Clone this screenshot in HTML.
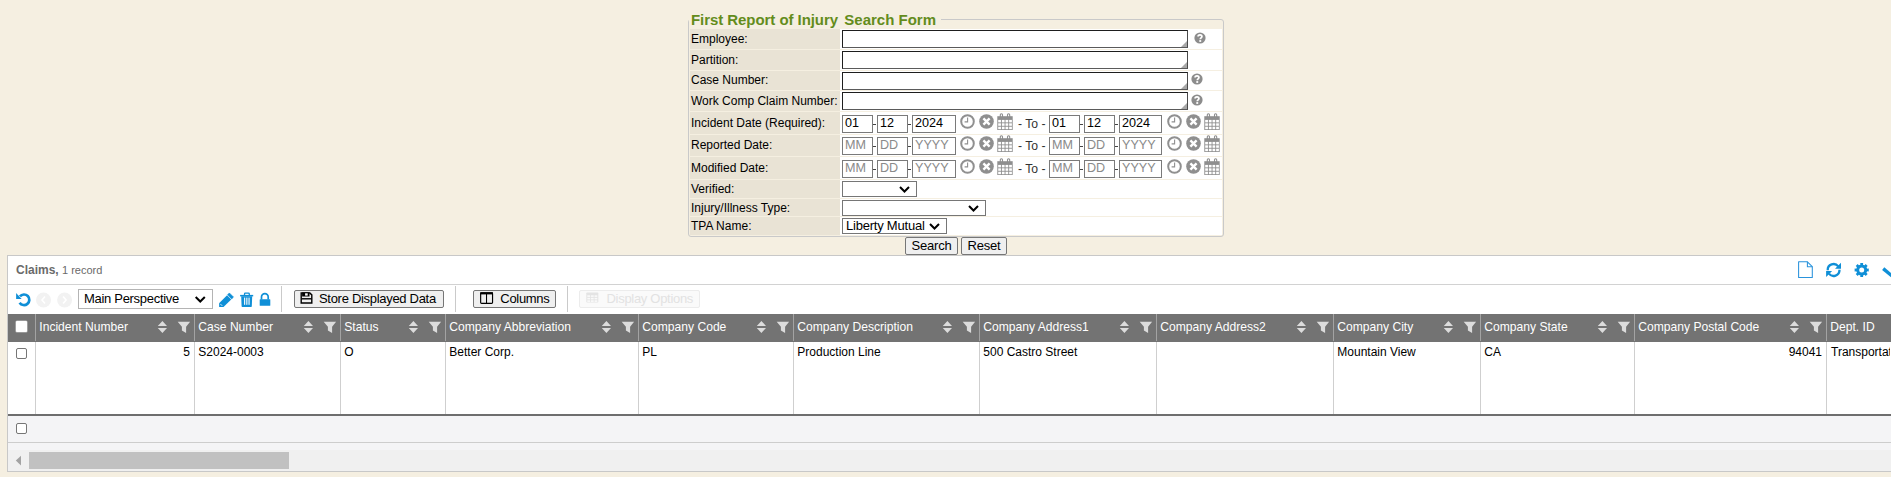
<!DOCTYPE html>
<html><head><meta charset="utf-8">
<style>
html,body{margin:0;padding:0;}
body{width:1891px;height:477px;overflow:hidden;background:#f5efe1;font-family:"Liberation Sans",sans-serif;font-size:12px;color:#000;position:relative;}
.a{position:absolute;}
/* form */
#fs{left:688px;top:19px;width:534px;height:216px;border:1px solid #c9c9c9;border-radius:3px;}
#legend{left:689px;top:9px;height:20px;width:244px;padding:0 6px 0 2px;white-space:nowrap;background:#f5efe1;color:#638c1c;font-weight:bold;font-size:15px;line-height:20px;}
.lab{left:690px;width:150px;background:#e9e3d5;}
.val{left:840px;width:382px;background:#fff;}
.lt{left:691px;white-space:nowrap;}
.ta{left:842px;width:344px;height:16px;border:1px solid #1e1e1e;border-right-color:#4a4a4a;border-bottom-color:#5a5a5a;background:#fff;}
.ta:after{content:"";position:absolute;right:0;bottom:0;width:0;height:0;border-left:6px solid transparent;border-bottom:6px solid #a8a8a8;}
.help{width:11px;height:11px;border-radius:50%;background:#8c8c8c;color:#fff;font-weight:bold;font-size:10px;line-height:11px;text-align:center;}
.di{border:1px solid #7a7a7a;background:#fff;font-size:12.6px;line-height:15px;padding-left:2px;box-sizing:border-box;height:18px;}
.ph{color:#8a8a8a;}
.dsh{width:3px;height:1px;background:#444;}
.to{font-size:12.2px;line-height:14px;color:#333;white-space:nowrap;}
.sel{height:16px;border:1px solid #767676;background:#fff;box-sizing:border-box;}
.chev{position:absolute;top:4px;}
.st{position:absolute;left:3px;top:0px;font-size:13px;letter-spacing:-0.22px;line-height:14px;white-space:nowrap;}
.btn{height:18px;border:1px solid #767676;background:#efefef;border-radius:2px;box-sizing:border-box;font-size:13px;letter-spacing:-0.2px;line-height:16px;text-align:center;}
/* grid */
.psel{border:1px solid #b4b4b4;background:#fff;box-sizing:border-box;font-size:13px;letter-spacing:-0.3px;line-height:14px;white-space:nowrap;}
.tbtn{height:18px;border:1px solid #767676;background:#efefef;border-radius:2px;box-sizing:border-box;font-size:13px;letter-spacing:-0.3px;line-height:14px;white-space:nowrap;}
.tbtn.dis{border-color:#ececec;background:#fafafa;color:#e2e2e2;}
.hd{color:#fff;font-size:12.1px;line-height:14px;white-space:nowrap;}
.cv{line-height:14px;white-space:nowrap;}
.cb{width:11px;height:11px;border:1px solid #767676;border-radius:2px;box-sizing:border-box;background:#fff;}

#panel{left:7px;top:255px;width:1900px;height:215px;border:1px solid #c8c8c8;background:#fff;}
</style></head><body>
<svg width="0" height="0" style="position:absolute">
<defs>
<symbol id="help" viewBox="0 0 12 12"><circle cx="6" cy="6" r="5.6" fill="#8c8c8c"/><path d="M4.1 4.6 C4.1 2.4 7.9 2.4 7.9 4.6 C7.9 5.9 6.3 5.9 6.3 7.2" fill="none" stroke="#fff" stroke-width="1.8"/><rect x="5.3" y="8.1" width="1.9" height="1.8" fill="#fff"/></symbol>
<symbol id="clock" viewBox="0 0 15 15"><circle cx="7.5" cy="7.5" r="6.3" fill="none" stroke="#909090" stroke-width="2"/><path d="M7.6 3.6 V7.9 H4.6" fill="none" stroke="#909090" stroke-width="1.1"/></symbol>
<symbol id="clear" viewBox="0 0 15 15"><circle cx="7.5" cy="7.5" r="7.3" fill="#8f8f8f"/><path d="M4.4 4.4 L10.6 10.6 M10.6 4.4 L4.4 10.6" stroke="#fff" stroke-width="2.4"/></symbol>
<symbol id="cal" viewBox="0 0 16 17"><rect x="0.3" y="3.2" width="15.4" height="13.8" fill="#8f8f8f"/><g fill="#fff"><rect x="1.2" y="6.9" width="2.75" height="2.5"/><rect x="4.85" y="6.9" width="2.75" height="2.5"/><rect x="8.5" y="6.9" width="2.75" height="2.5"/><rect x="12.15" y="6.9" width="2.75" height="2.5"/><rect x="1.2" y="10.3" width="2.75" height="2.5"/><rect x="4.85" y="10.3" width="2.75" height="2.5"/><rect x="8.5" y="10.3" width="2.75" height="2.5"/><rect x="12.15" y="10.3" width="2.75" height="2.5"/><rect x="1.2" y="13.7" width="2.75" height="2.5"/><rect x="4.85" y="13.7" width="2.75" height="2.5"/><rect x="8.5" y="13.7" width="2.75" height="2.5"/><rect x="12.15" y="13.7" width="2.75" height="2.5"/></g><rect x="3.3" y="0.7" width="2.2" height="4" rx="1" fill="none" stroke="#8f8f8f" stroke-width="1.1"/><rect x="10.5" y="0.7" width="2.2" height="4" rx="1" fill="none" stroke="#8f8f8f" stroke-width="1.1"/></symbol>
<symbol id="chev" viewBox="0 0 11 7"><path d="M1 1 L5.5 5.5 L10 1" fill="none" stroke="#000" stroke-width="2"/></symbol>
</defs></svg>
<div class="a" id="fs"></div>
<div class="a" id="legend" style="top:10px"><span style="letter-spacing:-0.06px">First Report of Injury</span><span style="position:absolute;left:155.3px;top:0">Search Form</span></div>

<!-- rows -->
<div class="a lab" style="top:29px;height:20px"></div><div class="a val" style="top:29px;height:20px"></div>
<div class="a lab" style="top:50px;height:20px"></div><div class="a val" style="top:50px;height:20px"></div>
<div class="a lab" style="top:71px;height:19px"></div><div class="a val" style="top:71px;height:19px"></div>
<div class="a lab" style="top:91px;height:20px"></div><div class="a val" style="top:91px;height:20px"></div>
<div class="a lab" style="top:112px;height:22px"></div><div class="a val" style="top:112px;height:22px"></div>
<div class="a lab" style="top:135px;height:21px"></div><div class="a val" style="top:135px;height:21px"></div>
<div class="a lab" style="top:157px;height:22px"></div><div class="a val" style="top:157px;height:22px"></div>
<div class="a lab" style="top:180px;height:18px"></div><div class="a val" style="top:180px;height:18px"></div>
<div class="a lab" style="top:199px;height:17px"></div><div class="a val" style="top:199px;height:17px"></div>
<div class="a lab" style="top:217px;height:18px"></div><div class="a val" style="top:217px;height:18px"></div>
<div class="a lt" style="top:32px">Employee:</div>
<div class="a lt" style="top:53px">Partition:</div>
<div class="a lt" style="top:73px">Case Number:</div>
<div class="a lt" style="top:94px">Work Comp Claim Number:</div>
<div class="a lt" style="top:115.5px">Incident Date (Required):</div>
<div class="a lt" style="top:137.5px">Reported Date:</div>
<div class="a lt" style="top:160.5px">Modified Date:</div>
<div class="a lt" style="top:182px">Verified:</div>
<div class="a lt" style="top:201px">Injury/Illness Type:</div>
<div class="a lt" style="top:219px">TPA Name:</div>
<div class="a ta" style="top:30px"></div>
<div class="a ta" style="top:51px"></div>
<div class="a ta" style="top:72px"></div>
<div class="a ta" style="top:92px"></div>
<svg class="a" style="left:1194px;top:32px" width="12" height="12"><use href="#help"/></svg>
<svg class="a" style="left:1191px;top:73px" width="12" height="12"><use href="#help"/></svg>
<svg class="a" style="left:1191px;top:94px" width="12" height="12"><use href="#help"/></svg>
<div class="a di" style="left:842px;top:115px;width:31px">01</div>
<div class="a di" style="left:877px;top:115px;width:31px">12</div>
<div class="a di" style="left:912px;top:115px;width:44px">2024</div>
<div class="a di" style="left:1049px;top:115px;width:31px">01</div>
<div class="a di" style="left:1084px;top:115px;width:31px">12</div>
<div class="a di" style="left:1119px;top:115px;width:43px">2024</div>
<div class="a dsh" style="left:873px;top:124px"></div>
<div class="a dsh" style="left:908px;top:124px"></div>
<div class="a dsh" style="left:1080px;top:124px"></div>
<div class="a dsh" style="left:1115px;top:124px"></div>
<svg class="a" style="left:959.7px;top:114px" width="15" height="15"><use href="#clock"/></svg>
<svg class="a" style="left:978.7px;top:114px" width="15" height="15"><use href="#clear"/></svg>
<svg class="a" style="left:997px;top:113px" width="16" height="17"><use href="#cal"/></svg>
<svg class="a" style="left:1167.2px;top:114px" width="15" height="15"><use href="#clock"/></svg>
<svg class="a" style="left:1186.2px;top:114px" width="15" height="15"><use href="#clear"/></svg>
<svg class="a" style="left:1203.8px;top:113px" width="16" height="17"><use href="#cal"/></svg>
<div class="a to" style="left:1018px;top:117px">- To -</div>
<div class="a di ph" style="left:842px;top:137px;width:31px">MM</div>
<div class="a di ph" style="left:877px;top:137px;width:31px">DD</div>
<div class="a di ph" style="left:912px;top:137px;width:44px">YYYY</div>
<div class="a di ph" style="left:1049px;top:137px;width:31px">MM</div>
<div class="a di ph" style="left:1084px;top:137px;width:31px">DD</div>
<div class="a di ph" style="left:1119px;top:137px;width:43px">YYYY</div>
<div class="a dsh" style="left:873px;top:146px"></div>
<div class="a dsh" style="left:908px;top:146px"></div>
<div class="a dsh" style="left:1080px;top:146px"></div>
<div class="a dsh" style="left:1115px;top:146px"></div>
<svg class="a" style="left:959.7px;top:136px" width="15" height="15"><use href="#clock"/></svg>
<svg class="a" style="left:978.7px;top:136px" width="15" height="15"><use href="#clear"/></svg>
<svg class="a" style="left:997px;top:135px" width="16" height="17"><use href="#cal"/></svg>
<svg class="a" style="left:1167.2px;top:136px" width="15" height="15"><use href="#clock"/></svg>
<svg class="a" style="left:1186.2px;top:136px" width="15" height="15"><use href="#clear"/></svg>
<svg class="a" style="left:1203.8px;top:135px" width="16" height="17"><use href="#cal"/></svg>
<div class="a to" style="left:1018px;top:139px">- To -</div>
<div class="a di ph" style="left:842px;top:160px;width:31px">MM</div>
<div class="a di ph" style="left:877px;top:160px;width:31px">DD</div>
<div class="a di ph" style="left:912px;top:160px;width:44px">YYYY</div>
<div class="a di ph" style="left:1049px;top:160px;width:31px">MM</div>
<div class="a di ph" style="left:1084px;top:160px;width:31px">DD</div>
<div class="a di ph" style="left:1119px;top:160px;width:43px">YYYY</div>
<div class="a dsh" style="left:873px;top:169px"></div>
<div class="a dsh" style="left:908px;top:169px"></div>
<div class="a dsh" style="left:1080px;top:169px"></div>
<div class="a dsh" style="left:1115px;top:169px"></div>
<svg class="a" style="left:959.7px;top:159px" width="15" height="15"><use href="#clock"/></svg>
<svg class="a" style="left:978.7px;top:159px" width="15" height="15"><use href="#clear"/></svg>
<svg class="a" style="left:997px;top:158px" width="16" height="17"><use href="#cal"/></svg>
<svg class="a" style="left:1167.2px;top:159px" width="15" height="15"><use href="#clock"/></svg>
<svg class="a" style="left:1186.2px;top:159px" width="15" height="15"><use href="#clear"/></svg>
<svg class="a" style="left:1203.8px;top:158px" width="16" height="17"><use href="#cal"/></svg>
<div class="a to" style="left:1018px;top:162px">- To -</div>
<div class="a sel" style="left:842px;top:181px;width:75px"><svg class="chev" style="left:56px" width="11" height="7"><use href="#chev"/></svg></div>
<div class="a sel" style="left:842px;top:200px;width:144px"><svg class="chev" style="left:125px" width="11" height="7"><use href="#chev"/></svg></div>
<div class="a sel" style="left:842px;top:218px;width:105px"><span class="st">Liberty Mutual</span><svg class="chev" style="left:85.5px" width="11" height="7"><use href="#chev"/></svg></div>
<div class="a btn" style="left:905px;top:237px;width:53px">Search</div>
<div class="a btn" style="left:961px;top:237px;width:46px">Reset</div>
<div class="a" id="panel"></div>
<div class="a" style="left:8px;top:284px;width:1883px;height:1px;background:#d2d2d2"></div>
<div class="a" style="left:16px;top:263px;font-weight:bold;color:#6a6a6a;line-height:14px;white-space:nowrap">Claims, <span style="font-weight:normal;font-size:11px">1 record</span></div>
<div class="a psel" style="left:78px;top:289px;width:135px;height:20px"><span style="position:absolute;left:5px;top:2px">Main Perspective</span></div>
<div class="a" style="left:281px;top:286px;width:1px;height:26px;background:#cacaca"></div>
<div class="a" style="left:455px;top:286px;width:1px;height:26px;background:#cacaca"></div>
<div class="a" style="left:567px;top:286px;width:1px;height:26px;background:#cacaca"></div>
<div class="a tbtn" style="left:294px;top:290px;width:150px"><span style="position:absolute;left:24px;top:1px">Store Displayed Data</span></div>
<div class="a tbtn" style="left:473px;top:290px;width:83px"><span style="position:absolute;left:26.3px;top:1px">Columns</span></div>
<div class="a tbtn dis" style="left:579px;top:290px;width:121px"><span style="position:absolute;left:26.5px;top:1px">Display Options</span></div>
<div class="a" style="left:8px;top:314px;width:1883px;height:28px;background:#737373"></div>
<div class="a" style="left:8px;top:342px;width:1883px;height:72px;background:#fff"></div>
<div class="a" style="left:8px;top:414px;width:1883px;height:2px;background:#6e6e6e"></div>
<div class="a" style="left:8px;top:416px;width:1883px;height:34px;background:#f4f4f6"></div>
<div class="a" style="left:8px;top:442px;width:1883px;height:1px;background:#cdcdcd"></div>
<div class="a" style="left:8px;top:450px;width:1883px;height:21px;background:#f0f0f0"></div>
<div class="a" style="left:29px;top:452px;width:260px;height:17px;background:#c1c1c1"></div>
<div class="a" style="left:35px;top:314px;width:1px;height:27px;background:#a3a3a3"></div>
<div class="a" style="left:35px;top:342px;width:1px;height:72px;background:#cfcfcf"></div>
<div class="a" style="left:194px;top:314px;width:1px;height:27px;background:#a3a3a3"></div>
<div class="a" style="left:194px;top:342px;width:1px;height:72px;background:#cfcfcf"></div>
<div class="a" style="left:340px;top:314px;width:1px;height:27px;background:#a3a3a3"></div>
<div class="a" style="left:340px;top:342px;width:1px;height:72px;background:#cfcfcf"></div>
<div class="a" style="left:445px;top:314px;width:1px;height:27px;background:#a3a3a3"></div>
<div class="a" style="left:445px;top:342px;width:1px;height:72px;background:#cfcfcf"></div>
<div class="a" style="left:638px;top:314px;width:1px;height:27px;background:#a3a3a3"></div>
<div class="a" style="left:638px;top:342px;width:1px;height:72px;background:#cfcfcf"></div>
<div class="a" style="left:793px;top:314px;width:1px;height:27px;background:#a3a3a3"></div>
<div class="a" style="left:793px;top:342px;width:1px;height:72px;background:#cfcfcf"></div>
<div class="a" style="left:979px;top:314px;width:1px;height:27px;background:#a3a3a3"></div>
<div class="a" style="left:979px;top:342px;width:1px;height:72px;background:#cfcfcf"></div>
<div class="a" style="left:1156px;top:314px;width:1px;height:27px;background:#a3a3a3"></div>
<div class="a" style="left:1156px;top:342px;width:1px;height:72px;background:#cfcfcf"></div>
<div class="a" style="left:1333px;top:314px;width:1px;height:27px;background:#a3a3a3"></div>
<div class="a" style="left:1333px;top:342px;width:1px;height:72px;background:#cfcfcf"></div>
<div class="a" style="left:1480px;top:314px;width:1px;height:27px;background:#a3a3a3"></div>
<div class="a" style="left:1480px;top:342px;width:1px;height:72px;background:#cfcfcf"></div>
<div class="a" style="left:1634px;top:314px;width:1px;height:27px;background:#a3a3a3"></div>
<div class="a" style="left:1634px;top:342px;width:1px;height:72px;background:#cfcfcf"></div>
<div class="a" style="left:1826px;top:314px;width:1px;height:27px;background:#a3a3a3"></div>
<div class="a" style="left:1826px;top:342px;width:1px;height:72px;background:#cfcfcf"></div>
<div class="a hd" style="left:39.3px;top:320px">Incident Number</div>
<div class="a cv" style="left:36px;top:345px;width:154px;text-align:right">5</div>
<div class="a hd" style="left:198.3px;top:320px">Case Number</div>
<div class="a cv" style="left:198.3px;top:345px">S2024-0003</div>
<div class="a hd" style="left:344.3px;top:320px">Status</div>
<div class="a cv" style="left:344.3px;top:345px">O</div>
<div class="a hd" style="left:449.3px;top:320px">Company Abbreviation</div>
<div class="a cv" style="left:449.3px;top:345px">Better Corp.</div>
<div class="a hd" style="left:642.3px;top:320px">Company Code</div>
<div class="a cv" style="left:642.3px;top:345px">PL</div>
<div class="a hd" style="left:797.3px;top:320px">Company Description</div>
<div class="a cv" style="left:797.3px;top:345px">Production Line</div>
<div class="a hd" style="left:983.3px;top:320px">Company Address1</div>
<div class="a cv" style="left:983.3px;top:345px">500 Castro Street</div>
<div class="a hd" style="left:1160.3px;top:320px">Company Address2</div>
<div class="a hd" style="left:1337.3px;top:320px">Company City</div>
<div class="a cv" style="left:1337.3px;top:345px">Mountain View</div>
<div class="a hd" style="left:1484.3px;top:320px">Company State</div>
<div class="a cv" style="left:1484.3px;top:345px">CA</div>
<div class="a hd" style="left:1638.3px;top:320px">Company Postal Code</div>
<div class="a cv" style="left:1635px;top:345px;width:187px;text-align:right">94041</div>
<div class="a hd" style="left:1830.3px;top:320px">Dept. ID</div>
<div class="a" style="left:1827px;top:345px;width:63px;height:16px;overflow:hidden"><div class="cv" style="position:absolute;left:4px;top:0">Transportation</div></div>
<div class="a" style="left:16.3px;top:321.2px;width:10.5px;height:10.6px;background:#fff;border-radius:1px;box-shadow:0 0 0 0.6px #bdbdbd"></div>
<div class="a cb" style="left:16px;top:348px"></div>
<div class="a cb" style="left:16px;top:423px"></div>
<div class="a" style="left:0;top:472px;width:1891px;height:5px;background:#f5efe1"></div>
<svg id="icons" class="a" style="left:0;top:0" width="1891" height="477" viewBox="0 0 1891 477">
<path d="M19.94 296.39 A5.3 5.3 0 1 1 19.61 302.76" fill="none" stroke="#0f8fd7" stroke-width="2.7"/>
<path d="M16.1 292.9 L16.1 298.9 L21.6 298.9 Z" fill="#0f8fd7"/>
<circle cx="43.5" cy="300" r="7.5" fill="#f2f2f2"/>
<path d="M45.0 296.5 L42.0 300 L45.0 303.5" fill="none" stroke="#fff" stroke-width="1.6"/>
<circle cx="64.6" cy="300" r="7.5" fill="#f2f2f2"/>
<path d="M63.099999999999994 296.5 L66.1 300 L63.099999999999994 303.5" fill="none" stroke="#fff" stroke-width="1.6"/>
<path d="M195.7 297 L200.25 301.5 L204.8 297" fill="none" stroke="#000" stroke-width="2"/>
<path d="M219.10 303.20 L227.05 295.25 L231.20 299.40 L223.50 306.90 L219.10 306.90 Z" fill="#0f8fd7"/>
<path d="M227.55 294.75 L229.35 292.95 L233.50 297.10 L231.70 298.90 Z" fill="#0f8fd7" stroke="#0f8fd7" stroke-width="0.6" stroke-linejoin="round"/>
<path d="M220.3 303.9 L222.3 305.9" stroke="#fff" stroke-width="0.9" opacity="0.9"/>
<rect x="240.1" y="294.9" width="13.1" height="1.5" fill="#0f8fd7"/>
<path d="M244.5 295 V294 Q244.5 293.2 245.3 293.2 H248.5 Q249.3 293.2 249.3 294 V295" fill="none" stroke="#0f8fd7" stroke-width="1.3"/>
<path d="M241.2 296.3 H252.2 L251.8 306.2 Q251.8 306.9 251.1 306.9 H242.3 Q241.6 306.9 241.6 306.2 Z" fill="#0f8fd7"/>
<rect x="244.1" y="297.6" width="1.1" height="7.2" fill="#fff"/>
<rect x="246.3" y="297.6" width="1.1" height="7.2" fill="#fff"/>
<rect x="248.5" y="297.6" width="1.1" height="7.2" fill="#fff"/>
<path d="M261.5 299.5 V297 A3.35 3.35 0 0 1 268.2 297 V299.5" fill="none" stroke="#0f8fd7" stroke-width="1.7"/>
<rect x="259.7" y="299.2" width="10.6" height="6.6" rx="0.6" fill="#0f8fd7"/>
<path d="M301.2 292.9 H309.8 L311.8 294.9 V303 H301.2 Z" fill="none" stroke="#000" stroke-width="1.4"/>
<rect x="302.1" y="292.4" width="7.4" height="4.1" fill="#000"/>
<rect x="305.1" y="293.3" width="2.6" height="2.3" fill="#fff"/>
<rect x="301.5" y="298.1" width="10" height="1.4" fill="#000"/>
<rect x="480.65" y="292.9" width="11.9" height="10.5" rx="0.9" fill="none" stroke="#000" stroke-width="1.15"/>
<rect x="480.2" y="292.3" width="12.8" height="2.1" fill="#000"/>
<rect x="486.0" y="293" width="1.05" height="10.5" fill="#000"/>
<rect x="586.3" y="292.5" width="12" height="10" rx="0.8" fill="#e4e4e4"/>
<rect x="587.3" y="295.3" width="2.8" height="1.6" fill="#fafafa"/>
<rect x="590.9" y="295.3" width="2.8" height="1.6" fill="#fafafa"/>
<rect x="594.5" y="295.3" width="2.8" height="1.6" fill="#fafafa"/>
<rect x="587.3" y="297.8" width="2.8" height="1.6" fill="#fafafa"/>
<rect x="590.9" y="297.8" width="2.8" height="1.6" fill="#fafafa"/>
<rect x="594.5" y="297.8" width="2.8" height="1.6" fill="#fafafa"/>
<rect x="587.3" y="300.3" width="2.8" height="1.6" fill="#fafafa"/>
<rect x="590.9" y="300.3" width="2.8" height="1.6" fill="#fafafa"/>
<rect x="594.5" y="300.3" width="2.8" height="1.6" fill="#fafafa"/>
<path d="M1798.6 261.8 H1807.4 L1812.3 266.7 V277.5 H1798.6 Z" fill="none" stroke="#2a93dc" stroke-width="1.05" stroke-linejoin="round"/>
<path d="M1807.4 261.8 V266.7 H1812.3" fill="none" stroke="#2a93dc" stroke-width="1.05"/>
<path d="M1827.70 270.21 A5.9 5.9 0 0 1 1838.25 266.37" fill="none" stroke="#0f8fd7" stroke-width="2.3"/>
<path d="M1841 262.8 V268.8 H1835 Z" fill="#0f8fd7"/>
<path d="M1839.50 269.79 A5.9 5.9 0 0 1 1828.95 273.63" fill="none" stroke="#0f8fd7" stroke-width="2.3"/>
<path d="M1826.1 277.1 V271.1 H1832.1 Z" fill="#0f8fd7"/>
<path d="M1860.41 265.17 L1860.26 262.94 L1863.14 262.94 L1862.99 265.17 L1864.20 265.67 L1865.67 264.00 L1867.70 266.03 L1866.03 267.50 L1866.53 268.71 L1868.76 268.56 L1868.76 271.44 L1866.53 271.29 L1866.03 272.50 L1867.70 273.97 L1865.67 276.00 L1864.20 274.33 L1862.99 274.83 L1863.14 277.06 L1860.26 277.06 L1860.41 274.83 L1859.20 274.33 L1857.73 276.00 L1855.70 273.97 L1857.37 272.50 L1856.87 271.29 L1854.64 271.44 L1854.64 268.56 L1856.87 268.71 L1857.37 267.50 L1855.70 266.03 L1857.73 264.00 L1859.20 265.67 Z" fill="#0f8fd7"/>
<circle cx="1861.7" cy="270.0" r="5.5" fill="#0f8fd7"/>
<circle cx="1861.7" cy="270.0" r="2.5" fill="#fff"/>
<path d="M1883.2 268.6 L1892.5 276.4" stroke="#0f8fd7" stroke-width="3.4"/>
<path d="M157.8 326 H167 L162.4 320.9 Z M157.8 327.9 H167 L162.4 333 Z" fill="#dcdcdc"/>
<path d="M177.7 321.8 H190.1 L186.1 326.8 V333 L181.9 330.6 V326.8 Z" fill="#dcdcdc"/>
<path d="M303.8 326 H313 L308.4 320.9 Z M303.8 327.9 H313 L308.4 333 Z" fill="#dcdcdc"/>
<path d="M323.7 321.8 H336.1 L332.1 326.8 V333 L327.9 330.6 V326.8 Z" fill="#dcdcdc"/>
<path d="M408.8 326 H418 L413.4 320.9 Z M408.8 327.9 H418 L413.4 333 Z" fill="#dcdcdc"/>
<path d="M428.7 321.8 H441.1 L437.1 326.8 V333 L432.9 330.6 V326.8 Z" fill="#dcdcdc"/>
<path d="M601.8 326 H611 L606.4 320.9 Z M601.8 327.9 H611 L606.4 333 Z" fill="#dcdcdc"/>
<path d="M621.7 321.8 H634.1 L630.1 326.8 V333 L625.9 330.6 V326.8 Z" fill="#dcdcdc"/>
<path d="M756.8 326 H766 L761.4 320.9 Z M756.8 327.9 H766 L761.4 333 Z" fill="#dcdcdc"/>
<path d="M776.7 321.8 H789.1 L785.1 326.8 V333 L780.9 330.6 V326.8 Z" fill="#dcdcdc"/>
<path d="M942.8 326 H952 L947.4 320.9 Z M942.8 327.9 H952 L947.4 333 Z" fill="#dcdcdc"/>
<path d="M962.7 321.8 H975.1 L971.1 326.8 V333 L966.9 330.6 V326.8 Z" fill="#dcdcdc"/>
<path d="M1119.8 326 H1129 L1124.4 320.9 Z M1119.8 327.9 H1129 L1124.4 333 Z" fill="#dcdcdc"/>
<path d="M1139.7 321.8 H1152.1 L1148.1 326.8 V333 L1143.9 330.6 V326.8 Z" fill="#dcdcdc"/>
<path d="M1296.8 326 H1306 L1301.4 320.9 Z M1296.8 327.9 H1306 L1301.4 333 Z" fill="#dcdcdc"/>
<path d="M1316.7 321.8 H1329.1 L1325.1 326.8 V333 L1320.9 330.6 V326.8 Z" fill="#dcdcdc"/>
<path d="M1443.8 326 H1453 L1448.4 320.9 Z M1443.8 327.9 H1453 L1448.4 333 Z" fill="#dcdcdc"/>
<path d="M1463.7 321.8 H1476.1 L1472.1 326.8 V333 L1467.9 330.6 V326.8 Z" fill="#dcdcdc"/>
<path d="M1597.8 326 H1607 L1602.4 320.9 Z M1597.8 327.9 H1607 L1602.4 333 Z" fill="#dcdcdc"/>
<path d="M1617.7 321.8 H1630.1 L1626.1 326.8 V333 L1621.9 330.6 V326.8 Z" fill="#dcdcdc"/>
<path d="M1789.8 326 H1799 L1794.4 320.9 Z M1789.8 327.9 H1799 L1794.4 333 Z" fill="#dcdcdc"/>
<path d="M1809.7 321.8 H1822.1 L1818.1 326.8 V333 L1813.9 330.6 V326.8 Z" fill="#dcdcdc"/>
<path d="M21 455.7 V465.4 L15.8 460.5 Z" fill="#a3a3a3"/>
</svg>
</body></html>
